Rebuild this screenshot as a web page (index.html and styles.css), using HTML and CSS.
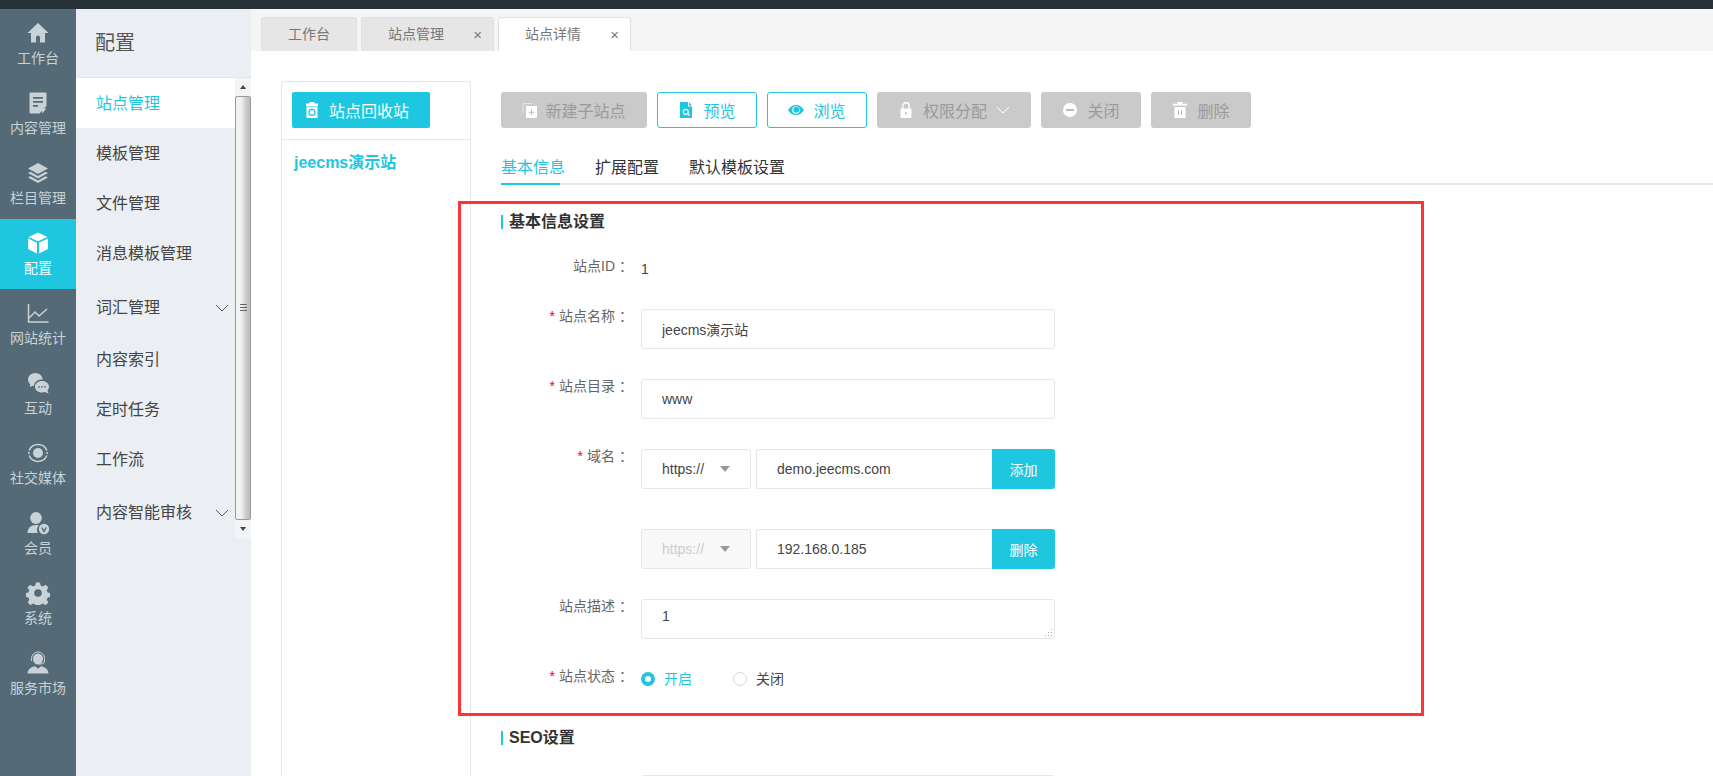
FILE: index.html
```html
<!DOCTYPE html>
<html lang="zh-CN">
<head>
<meta charset="utf-8">
<title>站点详情</title>
<link rel="stylesheet" href="styles.css">
</head>
<body>
<div class="topbar"></div>
<div class="app">
  <nav class="rail">
    <a class="rail-item"><svg class="rail-icon" viewBox="0 0 24 24"><path d="M12 2 1.500 12H5v9.500h5v-5a2 2 0 0 1 4 0v5h5V12h3.500z"/></svg><span>工作台</span></a>
    <a class="rail-item"><svg class="rail-icon" viewBox="0 0 24 24"><path fill-rule="evenodd" d="M4.500 1.500h15a1 1 0 0 1 1 1V15l-7 7.500h-9a1 1 0 0 1-1-1v-19a1 1 0 0 1 1-1zM7 6v1.800h10V6zm0 4v1.800h10V10zm0 4v1.800h5V14z"/><path d="M16 22.500V17.500h4.500z"/></svg><span>内容管理</span></a>
    <a class="rail-item"><svg class="rail-icon" viewBox="0 0 24 24"><path d="M12 2 22 7.500 12 13 2 7.500z"/><path d="M4.500 10.800 12 15l7.500-4.200L22 12l-10 5.500L2 12z"/><path d="M4.500 15.300 12 19.500l7.500-4.200L22 16.500 12 22 2 16.500z"/></svg><span>栏目管理</span></a>
    <a class="rail-item is-active"><svg class="rail-icon" viewBox="0 0 24 24"><path d="M12 1.500 21.500 6 12 10.200 2.500 6z"/><path d="M2 7.500l9 4.200V22.500l-9-4.500z"/><path d="M22 7.500l-9 4.200V22.500l9-4.500z"/></svg><span>配置</span></a>
    <a class="rail-item"><svg class="rail-icon" viewBox="0 0 24 24"><path class="line" d="M2.500 3v18h20M3 17l6-6 4 4 8-7"/></svg><span>网站统计</span></a>
    <a class="rail-item"><svg class="rail-icon" viewBox="0 0 24 24"><path d="M9.500 2C5.300 2 2 4.900 2 8.500c0 1.800.8 3.400 2.200 4.600L3.800 16l3-1.300c.4.100.7.200 1.100.2C8.200 11 11.700 8.500 16.300 8.500c.2 0 .4 0 .6 0C16.300 4.800 13.300 2 9.500 2z"/><path d="M16 10c-4 0-7 2.500-7 5.800s3 5.800 7 5.800c1 0 1.900-.2 2.800-.5L22.500 22.500l-1-3.300c.9-1 1.500-2.100 1.500-3.400C23 12.500 20 10 16 10z"/><circle class="cut" cx="13" cy="15.800" r=".9"/><circle class="cut" cx="16" cy="15.800" r=".9"/><circle class="cut" cx="19" cy="15.800" r=".9"/></svg><span>互动</span></a>
    <a class="rail-item"><svg class="rail-icon" viewBox="0 0 24 24"><circle cx="12" cy="12" r="5"/><path class="line" d="M3.200 9.500A9.500 9.500 0 0 1 20.800 9.500M20.800 14.500A9.500 9.500 0 0 1 3.200 14.500"/><circle cx="2.800" cy="12" r="1"/><circle cx="21.200" cy="12" r="1"/></svg><span>社交媒体</span></a>
    <a class="rail-item"><svg class="rail-icon" viewBox="0 0 24 24"><ellipse cx="10" cy="7" rx="5.800" ry="6"/><path d="M1.500 22c0-5 3.300-8 8.500-8 1 0 2 .1 2.800.4A6.500 6.500 0 0 0 11.800 22z"/><circle cx="18" cy="18" r="5.200"/><path class="tick" d="M15.800 16.500 18 20.500l2.200-4"/></svg><span>会员</span></a>
    <a class="rail-item"><svg class="rail-icon" viewBox="0 0 24 24"><path fill-rule="evenodd" d="M10 1.500h4l.6 3 2.300 1 2.700-1.700 2.800 2.800-1.700 2.700 1 2.300 3 .6v3.600l-3 .6-1 2.300 1.700 2.700-2.800 2.800-2.700-1.700-2.300 1-.6 3h-4l-.6-3-2.300-1-2.700 1.700-2.800-2.800 1.700-2.700-1-2.300-3-.6v-3.600l3-.6 1-2.300L1.400 6.600l2.800-2.800 2.700 1.700 2.300-1zM12 8.200a3.800 3.800 0 1 0 0 7.600 3.800 3.800 0 0 0 0-7.600z"/></svg><span>系统</span></a>
    <a class="rail-item"><svg class="rail-icon" viewBox="0 0 24 24"><ellipse cx="12" cy="8" rx="5" ry="5.500"/><path class="line thin" d="M5.500 10V7.500a6.500 6.500 0 0 1 13 0V10a3 3 0 0 1-3 3H13"/><path d="M1.500 22.500c0-4 3.800-6.500 7.500-7.200l3 2.500 3-2.500c3.700.7 7.500 3.200 7.500 7.200z"/></svg><span>服务市场</span></a>
  </nav>

  <aside class="side">
    <h2 class="side-title">配置</h2>
    <div class="side-scroll">
      <ul class="side-list">
        <li class="side-item is-current">站点管理</li>
        <li class="side-item">模板管理</li>
        <li class="side-item">文件管理</li>
        <li class="side-item">消息模板管理</li>
        <li class="side-item has-sub">词汇管理<svg class="chev" viewBox="0 0 14 8"><path d="M1 1l6 6 6-6"/></svg></li>
        <li class="side-item">内容索引</li>
        <li class="side-item">定时任务</li>
        <li class="side-item">工作流</li>
        <li class="side-item has-sub">内容智能审核<svg class="chev" viewBox="0 0 14 8"><path d="M1 1l6 6 6-6"/></svg></li>
      </ul>
      <div class="scrollbar">
        <div class="sb-btn"><span class="sb-up"></span></div>
        <div class="sb-thumb"><span class="sb-grip"></span></div>
        <div class="sb-btn"><span class="sb-down"></span></div>
      </div>
    </div>
  </aside>

  <main class="main">
    <div class="tabs">
      <div class="tab tab-home">工作台</div>
      <div class="tab tab-a">站点管理<span class="tab-x">×</span></div>
      <div class="tab tab-a is-open">站点详情<span class="tab-x">×</span></div>
    </div>

    <div class="page">
      <section class="tree">
        <div class="tree-head">
          <button class="btn-recycle"><svg class="ic16" viewBox="0 0 16 16"><path fill="#fff" d="M5.500 0h5v1.500H14V4H2V1.500h3.500zM2.500 4.500h11V16h-11z"/><circle cx="8" cy="10.300" r="3" fill="none" stroke="#1ec6e0" stroke-width="1.300"/></svg>站点回收站</button>
        </div>
        <div class="tree-node">jeecms演示站</div>
      </section>

      <section class="detail">
        <div class="toolbar">
          <button class="tb w146 off"><svg class="ic16" viewBox="0 0 16 16"><path fill="none" stroke="#e4e4e4" d="M1 11V1.500h9"/><path fill="#fff" d="M4 4h11v11a1 1 0 0 1-1 1H5a1 1 0 0 1-1-1z"/><path stroke="#bbb" d="M9.500 7.500v5.500M6.800 10.300h5.400"/></svg>新建子站点</button>
          <button class="tb w100 on"><svg class="ic16" viewBox="0 0 16 16"><path fill="#1ec6e0" d="M2 0h8v4.500h4V16H2zM11 0l3 3.500h-3z"/><circle cx="7.800" cy="9.800" r="2.500" fill="none" stroke="#fff" stroke-width="1.200"/><path stroke="#fff" stroke-width="1.200" d="M9.500 11.500l2 2"/></svg>预览</button>
          <button class="tb w100 on"><svg class="ic16" viewBox="0 0 16 16"><path fill="#1ec6e0" d="M8 3c3.500 0 6.300 2 8 5-1.700 3-4.500 5-8 5s-6.300-2-8-5c1.700-3 4.500-5 8-5z"/><circle cx="8" cy="8" r="3.800" fill="#fff"/><circle cx="8.300" cy="7.700" r="2.900" fill="#1ec6e0"/></svg>浏览</button>
          <button class="tb w154 off"><svg class="ic16" viewBox="0 0 16 16"><path fill="none" stroke="#fff" stroke-width="1.400" d="M4.800 7V4a3.200 3.200 0 0 1 6.400 0v3"/><path fill="#fff" d="M2.500 6.500h11V15a1 1 0 0 1-1 1h-9a1 1 0 0 1-1-1z"/><circle cx="8" cy="11.300" r="1.100" fill="#bbb"/></svg>权限分配<svg class="tb-chev" viewBox="0 0 14 8"><path d="M1 1l6 6 6-6"/></svg></button>
          <button class="tb w100 off"><svg class="ic16" viewBox="0 0 16 16"><circle cx="8" cy="8" r="7" fill="#fff"/><path stroke="#bbb" stroke-width="2" d="M4 8h8"/></svg>关闭</button>
          <button class="tb w100 off"><svg class="ic16" viewBox="0 0 16 16"><path fill="#fff" d="M5.500 0h5v1.800H15v1.700H1V1.800h4.500zM2.500 5h11v11h-11z"/><path stroke="#bbb" d="M6.500 8v5M9.500 8v5"/></svg>删除</button>
        </div>

        <div class="subtabs">
          <div class="subtab is-sel">基本信息</div>
          <div class="subtab">扩展配置</div>
          <div class="subtab">默认模板设置</div>
        </div>

        <h3 class="sec-title">基本信息设置</h3>

        <form class="form">
          <div class="row row-id">
            <label class="lab">站点ID<b class="colon">：</b></label>
            <div class="val-id">1</div>
          </div>
          <div class="row">
            <label class="lab"><i>*</i>站点名称<b class="colon">：</b></label>
            <input class="inp inp-full" value="jeecms演示站">
          </div>
          <div class="row">
            <label class="lab"><i>*</i>站点目录<b class="colon">：</b></label>
            <input class="inp inp-full" value="www">
          </div>
          <div class="row row-dom">
            <label class="lab"><i>*</i>域名<b class="colon">：</b></label>
            <div class="sel">https://<span class="tri"></span></div>
            <div class="dom">
              <input class="inp inp-dom" value="demo.jeecms.com">
              <button type="button" class="dom-btn">添加</button>
            </div>
          </div>
          <div class="row">
            <label class="lab"></label>
            <div class="sel is-dis">https://<span class="tri"></span></div>
            <div class="dom">
              <input class="inp inp-dom" value="192.168.0.185">
              <button type="button" class="dom-btn">删除</button>
            </div>
          </div>
          <div class="row">
            <label class="lab">站点描述<b class="colon">：</b></label>
            <div class="area-wrap">
              <textarea class="inp inp-area">1</textarea>
              <svg class="grip" viewBox="0 0 9 9"><path d="M7 1h1v1H7zM4 4h1v1H4zM7 4h1v1H7zM1 7h1v1H1zM4 7h1v1H4zM7 7h1v1H7z"/></svg>
            </div>
          </div>
          <div class="row row-radio">
            <label class="lab"><i>*</i>站点状态<b class="colon">：</b></label>
            <div class="radios">
              <span class="radio checked"></span><span class="rtxt cyan">开启</span>
              <span class="radio"></span><span class="rtxt">关闭</span>
            </div>
          </div>
        </form>

        <h3 class="sec-title sec-seo">SEO设置</h3>
        <input class="inp inp-full inp-seo" value="">

        <div class="redbox"></div>
      </section>
    </div>
  </main>
</div>
</body>
</html>
```
FILE: styles.css
```css
* { box-sizing: border-box; }
html, body { margin: 0; padding: 0; height: 776px; overflow: hidden; }
body {
  font-family: "Liberation Sans", "Noto Sans CJK SC", sans-serif;
  font-size: 14px;
  color: #333;
  background: #fff;
}
.topbar { height: 9px; background: #263238; }
.app { display: flex; height: 767px; overflow: hidden; }

/* rail */
.rail { width: 76px; flex: none; background: #546b77; overflow: hidden; }
.rail-item {
  height: 70px;
  display: flex;
  flex-direction: column;
  align-items: center;
  padding-top: 12px;
  color: #c9d2d6;
  line-height: 20px;
  font-size: 14px;
}
.rail-icon { width: 24px; height: 24px; fill: #c9d2d6; margin-bottom: 3px; flex: none; }
.rail-icon .line { fill: none; stroke: #c9d2d6; stroke-width: 1.500; }
.rail-icon .thin { stroke-width: 1; }
.rail-icon .cut { fill: #546b77; }
.rail-icon .tick { fill: none; stroke: #546b77; stroke-width: 1.500; }
.rail-item.is-active { background: #1ec6e0; color: #fff; }
.rail-item.is-active .rail-icon { fill: #fff; }

/* second column */
.side { width: 175px; flex: none; background: #ebeef2; }
.side-title {
  margin: 0;
  height: 69px;
  padding: 20px 0 0 19px;
  font-weight: normal;
  font-size: 20px;
  line-height: 28px;
  color: #555;
  border-bottom: 1px solid #e3e5e8;
}
.side-scroll { display: flex; height: 460px; }
.side-list { list-style: none; margin: 0; padding: 0; width: 159px; flex: none; font-size: 16px; color: #444; }
.side-item { height: 50px; line-height: 50px; padding: 2px 0 0 20px; display: flex; align-items: center; justify-content: space-between; }
.side-item.is-current { background: #fff; color: #1ec6e0; }
.side-item:nth-child(5) { height: 57px; padding-top: 2px; }
.side-item:nth-child(6) { height: 50px; padding-top: 0; }
.side-item:nth-child(7) { height: 49px; padding-top: 0; }
.side-item:nth-child(8) { height: 51px; padding-top: 0; }
.side-item:nth-child(9) { height: 53px; padding-top: 3px; }
.chev { width: 14px; height: 8px; margin-right: 6px; fill: none; stroke: #555; stroke-width: 1; }
.scrollbar { width: 16px; flex: none; background: #f0f0f0; display: flex; flex-direction: column; }
.sb-btn { height: 18px; flex: none; display: flex; align-items: center; justify-content: center; background: #f3f4f5; }
.sb-up { border: 3px solid transparent; border-top: 0; border-bottom: 4px solid #444; width: 0; }
.sb-down { border: 3px solid transparent; border-bottom: 0; border-top: 4px solid #444; width: 0; }
.sb-thumb {
  flex: 1;
  border: 1px solid #9a9a9a;
  border-radius: 2px;
  background: linear-gradient(to right, #f3f3f3 0, #f1f1f1 35%, #c8c8c8 75%, #bdbdbd 100%);
  display: flex;
  align-items: center;
  justify-content: center;
}
.sb-grip { width: 7px; height: 7px; background: repeating-linear-gradient(to bottom, #666 0, #666 1px, transparent 1px, transparent 3px); margin-top: -2px; }

/* main */
.main { flex: 1; min-width: 0; display: flex; flex-direction: column; }
.tabs {
  height: 42px;
  flex: none;
  background: #f5f5f5;
  display: flex;
  gap: 4px;
  padding: 8px 0 0 10px;
}
.tab {
  position: relative;
  height: 34px;
  line-height: 32px;
  background: #e6e6e6;
  border: 1px solid #e0e0e0;
  border-bottom: 0;
  border-radius: 3px 3px 0 0;
  color: #777;
}
.tab-home { width: 96px; text-align: center; }
.tab-a { width: 133px; padding-left: 26px; }
.tab-a.is-open { background: #fff; }
.tab-x { position: absolute; right: 11px; top: 1px; font-size: 15px; color: #777; }

.page { flex: 1; display: flex; padding: 30px 0 0 30px; min-height: 0; overflow: hidden; }
.tree { width: 190px; flex: none; border: 1px solid #e8e8e8; border-bottom: 0; border-radius: 3px 3px 0 0; }
.tree-head { height: 58px; padding: 10px; border-bottom: 1px solid #e8e8e8; }
.btn-recycle {
  width: 138px;
  height: 36px;
  border: 0;
  border-radius: 2px;
  background: #1ec6e0;
  color: #fff;
  font: inherit;
  font-size: 16px;
  display: flex;
  align-items: center;
  padding: 0 0 0 12px;
  gap: 9px;
}
.ic16 { width: 16px; height: 16px; flex: none; }
.tree-node { padding: 11px 0 0 12px; font-size: 16px; line-height: 24px; font-weight: bold; color: #1ec6e0; }

.detail { flex: 1; min-width: 0; padding: 11px 0 0 30px; position: relative; }
.toolbar { display: flex; gap: 10px; height: 36px; }
.tb {
  height: 36px;
  border-radius: 3px;
  font: inherit;
  font-size: 16px;
  display: flex;
  align-items: center;
  justify-content: center;
  gap: 9px;
  padding: 0;
}
.w146 { width: 146px; gap: 7px; }
.w100 { width: 100px; }
.w154 { width: 154px; }
.off { background: #cacaca; border: 0; color: #9b9b9b; }
.on { background: #fff; border: 1px solid #1ec6e0; color: #1ec6e0; }
.tb-chev { width: 14px; height: 8px; fill: none; stroke: #fff; stroke-width: 1; margin-left: 0; }

.subtabs { display: flex; gap: 30px; height: 57px; padding-top: 27px; border-bottom: 2px solid #e8e8e8; font-size: 16px; line-height: 26px; color: #333; }
.subtab { position: relative; }
.subtab.is-sel { color: #1ec6e0; }
.subtab.is-sel::after { content: ""; position: absolute; left: 0; bottom: -2px; width: 59px; height: 2px; background: #1ec6e0; }

.sec-title {
  margin: 30px 0 0;
  height: 14px;
  line-height: 14px;
  padding-left: 6px;
  border-left: 2px solid #1ec6e0;
  font-size: 16px;
  font-weight: bold;
  color: #333;
}

.form { display: flex; flex-direction: column; width: 554px; margin-top: 30px; }
.row { display: flex; margin-bottom: 30px; min-height: 40px; }
.row-id { min-height: 20px; height: 20px; margin-bottom: 30px; }
.row-dom { margin-bottom: 40px; }
.row-radio { margin-bottom: 0; min-height: 20px; }
.lab {
  width: 128px;
  flex: none;
  margin-right: 12px;
  text-align: right;
  line-height: 16px;
  color: #666;
  position: relative;
  top: -1px;
}
.lab i { font-style: normal; color: #f00; margin-right: 4px; }
.colon { display: inline-block; width: 14px; padding-left: 4px; text-align: left; white-space: nowrap; font-weight: normal; }
.val-id { line-height: 20px; color: #444; }
.inp {
  border: 1px solid #e6e6e6;
  border-radius: 3px;
  font: inherit;
  color: #444;
  background: #fff;
  outline: 0;
}
.inp-full { width: 414px; height: 40px; padding: 0 20px; }
.sel {
  width: 110px;
  height: 40px;
  flex: none;
  border: 1px solid #e6e6e6;
  border-radius: 3px;
  padding-left: 20px;
  line-height: 38px;
  color: #444;
  position: relative;
  margin-right: 5px;
}
.tri {
  position: absolute;
  left: 78px;
  top: 16px;
  width: 0;
  border: 5px solid transparent;
  border-bottom: 0;
  border-top: 6px solid #999;
}
.sel.is-dis { background: #f8f8f8; color: #ccc; }
.dom { display: flex; width: 299px; height: 40px; flex: none; }
.inp-dom { flex: 1; min-width: 0; height: 40px; padding: 0 20px; border-right: 0; border-radius: 3px 0 0 3px; }
.dom-btn {
  width: 63px;
  height: 40px;
  flex: none;
  border: 0;
  background: #1ec6e0;
  color: #fff;
  font: inherit;
  padding: 0;
  border-radius: 0 3px 3px 0;
}
.area-wrap { position: relative; width: 414px; height: 40px; }
.inp-area { display: block; width: 414px; height: 40px; padding: 6px 20px 0; line-height: 20px; resize: none; overflow: hidden; }
.grip { position: absolute; right: 2px; bottom: 2px; width: 9px; height: 9px; fill: #aaa; }
.radios { display: flex; align-items: center; height: 20px; }
.radio { width: 14px; height: 14px; border-radius: 50%; border: 1px solid #d9d9d9; flex: none; background: #fff; }
.radio.checked { border: 4px solid #1ec6e0; background: #fff; }
.rtxt { margin-left: 9px; width: 69px; line-height: 20px; color: #444; }
.rtxt.cyan { color: #1ec6e0; }

.sec-seo { margin-top: 42px; }
.inp-seo { margin-top: 30px; margin-left: 140px; display: block; }

.redbox {
  position: absolute;
  left: -13px;
  top: 120px;
  width: 966px;
  height: 515px;
  border: 3px solid #f33;
  pointer-events: none;
}
```
